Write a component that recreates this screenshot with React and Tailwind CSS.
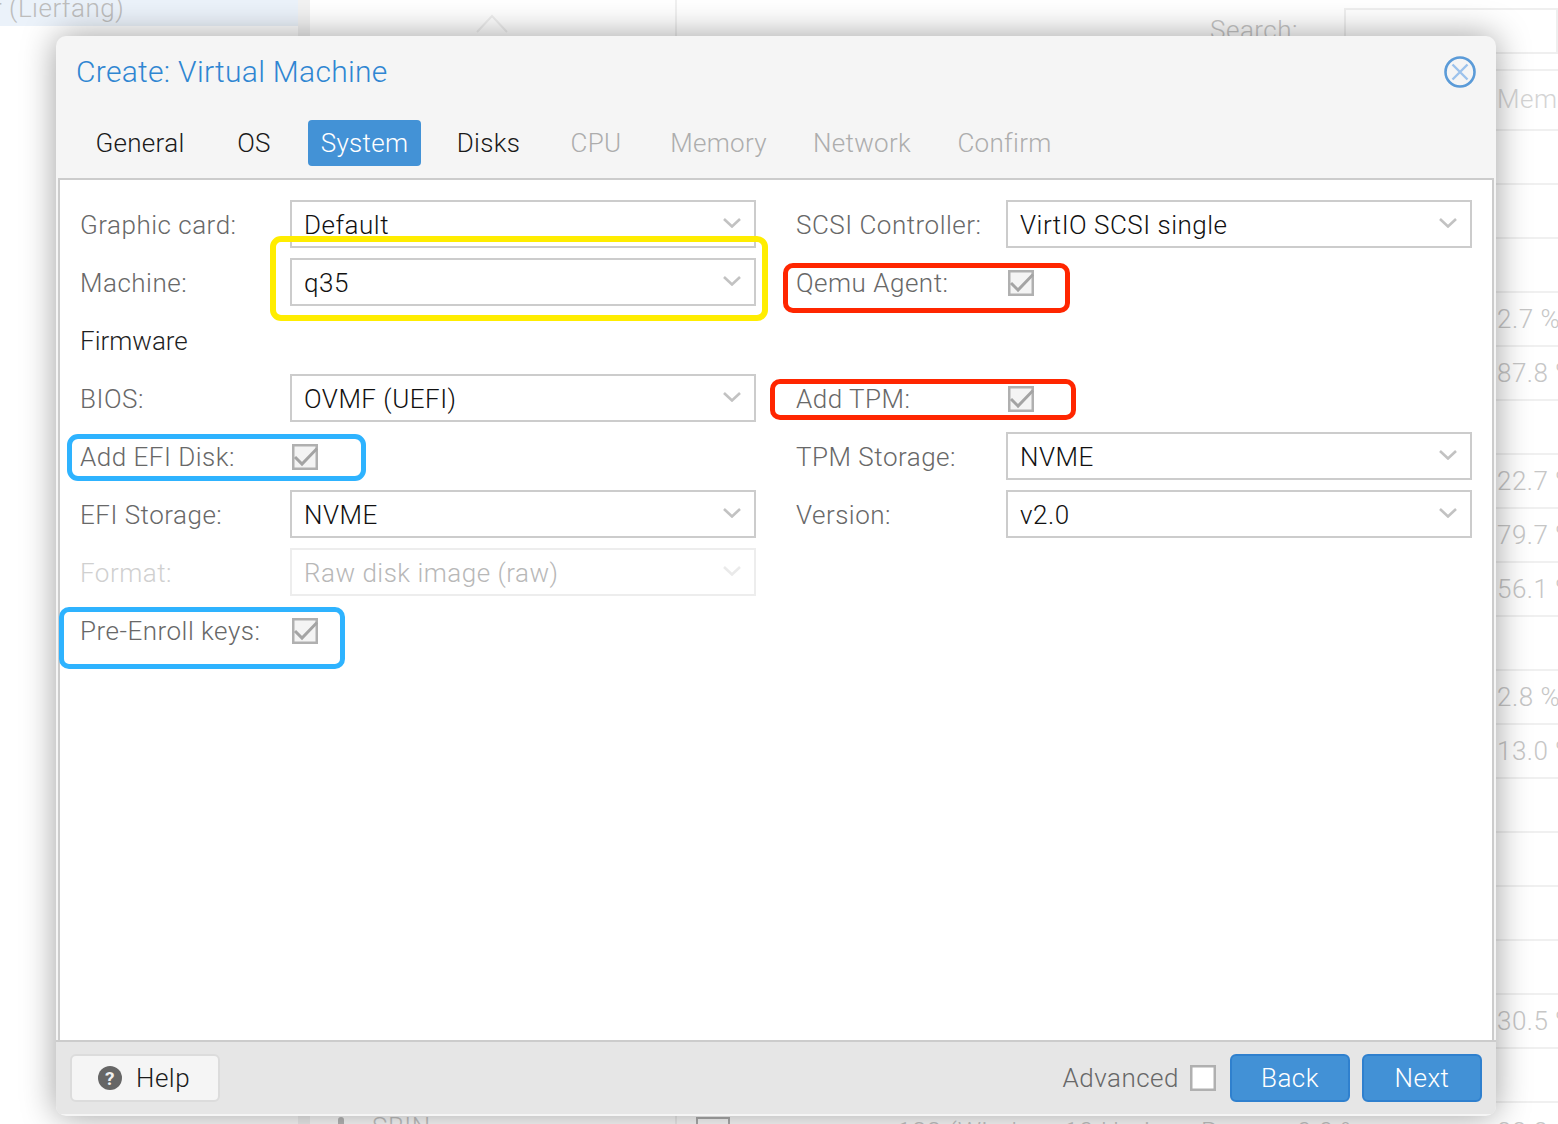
const rowLines = [
  { label: "" },
  { label: "" },
  { label: "" },
  { label: "2.7 %" },
  { label: "87.8 %" },
  { label: "" },
  { label: "22.7 %" },
  { label: "79.7 %" },
  { label: "56.1 %" },
  { label: "" },
  { label: "2.8 %" },
  { label: "13.0 %" },
  { label: "" },
  { label: "" },
  { label: "" },
  { label: "" },
  { label: "30.5 %" },
  { label: "" },
];

const tabs = [
  { name: "General", state: "done", width: "w-[120px]" },
  { name: "OS", state: "done", width: "w-[64px]" },
  { name: "System", state: "active", width: "w-[113px]" },
  { name: "Disks", state: "done", width: "w-[91px]" },
  { name: "CPU", state: "off", width: "w-[80px]" },
  { name: "Memory", state: "off", width: "w-[121px]" },
  { name: "Network", state: "off", width: "w-[122px]" },
  { name: "Confirm", state: "off", width: "w-[119px]" },
];

function Chevron({ light }) {
  return (
    <svg width="18" height="11" viewBox="0 0 18 11" fill="none" className="absolute right-[13px] top-[15px]">
      <path d="M1 2 L9 9.5 L17 2" stroke={light ? "#eaeaea" : "#c2c2c2"} strokeWidth="2.6" />
    </svg>
  );
}

function Select({ value, disabled }) {
  return (
    <div
      className={`relative flex h-12 w-[466px] items-center border-2 pl-3 pt-[2px] ${
        disabled ? "border-[#ededed] text-[#b8b8b8]" : "border-[#cccccc] text-[#111111]"
      }`}
    >
      {value}
      <Chevron light={disabled} />
    </div>
  );
}

function Check({ checked = true, className = "" }) {
  return (
    <svg width="26" height="26" viewBox="0 0 26 26" fill="none" className={className}>
      <rect x="1.2" y="1.2" width="23.6" height="23.6" fill={checked ? "#f4f4f4" : "#ffffff"} stroke="#b0b0b0" strokeWidth="2.6" />
      {checked && <path d="M3 13 L10 20 L25 4.5" stroke="#a4a4a4" strokeWidth="3" />}
    </svg>
  );
}

function Field({ label, muted, children }) {
  return (
    <div className="flex h-12 items-center">
      <div className={`w-[210px] shrink-0 pt-[2px] ${muted ? "text-[#d0d0d0]" : "text-[#686868]"}`}>{label}</div>
      {children}
    </div>
  );
}

function Background() {
  return (
    <div className="flex h-[1124px] w-[1558px] overflow-hidden bg-white text-[26px] text-[#c6c6c6]">
      <div className="w-[298px] shrink-0">
        <div className="h-[26px] overflow-hidden whitespace-nowrap bg-[#ebf2fa] leading-[16px] text-[#bdbdbd]">
          <span className="-ml-[7px]">r (Lierfang)</span>
        </div>
      </div>
      <div className="w-3 shrink-0 bg-[#f2f2f2]" />
      <div className="w-[365px] shrink-0">
        <div className="flex h-[1108px] justify-center pr-[2px] pt-[14px]">
          <svg width="34" height="20" viewBox="0 0 34 20" fill="none">
            <path d="M2 18 L17 2 L32 18" stroke="#efefef" strokeWidth="2" />
          </svg>
        </div>
        <div className="flex items-center pl-[28px]">
          <div className="mr-[28px] h-[22px] w-[6px] rounded-full bg-[#bbbbbb]" />
          SBIN
        </div>
      </div>
      <div className="w-[2px] shrink-0 bg-[#f0f0f0]" />
      <div className="w-[881px] shrink-0">
        <div className="flex h-[54px] justify-end pt-2">
          <div className="mr-[46px] leading-[44px]">Search:</div>
          <div className="h-[46px] w-[214px] border-2 border-[#efefef]" />
        </div>
        <div className="mt-[15px] h-[62px] overflow-hidden whitespace-nowrap border-y-2 border-[#f0f0f0] pl-[820px] leading-[56px] text-[#d4d4d4]">
          Memory
        </div>
        {rowLines.map((row, i) => (
          <div key={i} className="h-[54px] overflow-hidden whitespace-nowrap border-b-2 border-[#f0f0f0] pl-[820px] leading-[52px]">
            {row.label}
          </div>
        ))}
        <div className="flex h-[54px] whitespace-nowrap pt-[14px] leading-[30px]">
          <div className="ml-[19px] h-9 w-[34px] shrink-0 border-2 border-[#b0b0b0]" />
          <div className="ml-[167px] w-[167px] shrink-0">122 (Windows</div>
          <div className="w-[137px] shrink-0">10 Horizon</div>
          <div className="w-[96px] shrink-0">R</div>
          <div className="w-[200px] shrink-0">0.0 %</div>
          <div>22.2</div>
        </div>
      </div>
    </div>
  );
}

function Dialog() {
  return (
    <div className="absolute left-14 top-9 flex h-[1080px] w-[1440px] flex-col overflow-hidden rounded-[10px] bg-[#f5f5f5] shadow-[0_0_34px_rgba(0,0,0,0.38)]">
      <div className="flex h-[72px] shrink-0 items-center justify-between pl-5 pr-5">
        <div className="pb-[2px] text-[30px] tracking-[0.3px] text-[#2f86d2]">Create: Virtual Machine</div>
        <svg width="32" height="32" viewBox="0 0 32 32" fill="none">
          <circle cx="16" cy="16" r="14.5" stroke="#5b9bd8" strokeWidth="2.6" />
          <path d="M8.5 8.5 L23.5 23.5 M23.5 8.5 L8.5 23.5" stroke="#9cc2ec" strokeWidth="2.4" />
        </svg>
      </div>

      <div className="mt-3 flex h-[46px] shrink-0 gap-[22px] pl-6 tracking-[0.3px]">
        {tabs.map((tab) => (
          <div
            key={tab.name}
            className={`flex items-center justify-center rounded ${tab.width} ${
              tab.state === "active"
                ? "bg-[#4392d6] text-white"
                : tab.state === "done"
                  ? "text-[#1a1a1a]"
                  : "text-[#adadad]"
            }`}
          >
            {tab.name}
          </div>
        ))}
      </div>

      <div className="mx-[2px] mt-3 flex min-h-0 flex-1 gap-10 border-2 border-b-0 border-[#cccccc] bg-white px-5 pt-5">
        <div className="flex w-[676px] shrink-0 flex-col gap-[10px]">
          <Field label="Graphic card:">
            <Select value="Default" />
          </Field>
          <Field label="Machine:">
            <Select value="q35" />
          </Field>
          <div className="flex h-12 items-center pt-[2px] tracking-normal text-[#1f1f1f]">Firmware</div>
          <Field label="BIOS:">
            <Select value="OVMF (UEFI)" />
          </Field>
          <Field label="Add EFI Disk:">
            <Check className="ml-[2px] mt-[2px]" />
          </Field>
          <Field label="EFI Storage:">
            <Select value="NVME" />
          </Field>
          <Field label="Format:" muted>
            <Select value="Raw disk image (raw)" disabled />
          </Field>
          <Field label="Pre-Enroll keys:">
            <Check className="ml-[2px] mt-[2px]" />
          </Field>
        </div>
        <div className="flex w-[676px] shrink-0 flex-col gap-[10px]">
          <Field label="SCSI Controller:">
            <Select value="VirtIO SCSI single" />
          </Field>
          <Field label="Qemu Agent:">
            <Check className="ml-[2px] mt-[2px]" />
          </Field>
          <div className="h-12" />
          <Field label="Add TPM:">
            <Check className="ml-[2px] mt-[2px]" />
          </Field>
          <Field label="TPM Storage:">
            <Select value="NVME" />
          </Field>
          <Field label="Version:">
            <Select value="v2.0" />
          </Field>
        </div>
      </div>

      <div className="mb-[2px] flex h-[74px] shrink-0 items-center border-t-2 border-[#cccccc] bg-[#e6e6e6] px-[14px]">
        <div className="flex h-12 w-[150px] items-center rounded-md border-2 border-[#dcdcdc] bg-[#f5f5f5] pl-[26px] text-[#1a1a1a]">
          <span className="flex h-6 w-6 items-center justify-center rounded-full bg-[#666666] text-[19px] font-bold leading-none text-[#f0f0f0]">
            ?
          </span>
          <span className="ml-[14px]">Help</span>
        </div>
        <div className="ml-auto text-[#686868]">Advanced</div>
        <Check checked={false} className="ml-[11px] mr-[14px]" />
        <div className="flex h-12 w-[120px] items-center justify-center rounded-md border-2 border-[#2f80ce] bg-[#4291d6] text-white">
          Back
        </div>
        <div className="ml-3 flex h-12 w-[120px] items-center justify-center rounded-md border-2 border-[#2f80ce] bg-[#4291d6] text-white">
          Next
        </div>
      </div>
    </div>
  );
}

export default function App() {
  return (
    <div className="relative h-[1124px] w-[1558px] overflow-hidden bg-white font-['Roboto',sans-serif] text-[26px] font-light tracking-[0.5px]">
      <Background />
      <Dialog />
      {/* hand drawn annotations on top of the screenshot */}
      <div className="absolute left-[270px] top-[236px] h-[85px] w-[498px] rounded-[11px] border-[6px] border-[#ffed00]" />
      <div className="absolute left-[783px] top-[263px] h-[50px] w-[287px] rounded-[10px] border-[5px] border-[#ff2600]" />
      <div className="absolute left-[770px] top-[379px] h-[41px] w-[306px] rounded-[10px] border-[5px] border-[#ff2600]" />
      <div className="absolute left-[67px] top-[434px] h-[47px] w-[299px] rounded-[11px] border-[5px] border-[#2eb3ff]" />
      <div className="absolute left-[59px] top-[607px] h-[62px] w-[286px] rounded-[10px] border-[5px] border-[#2eb3ff]" />
    </div>
  );
}
